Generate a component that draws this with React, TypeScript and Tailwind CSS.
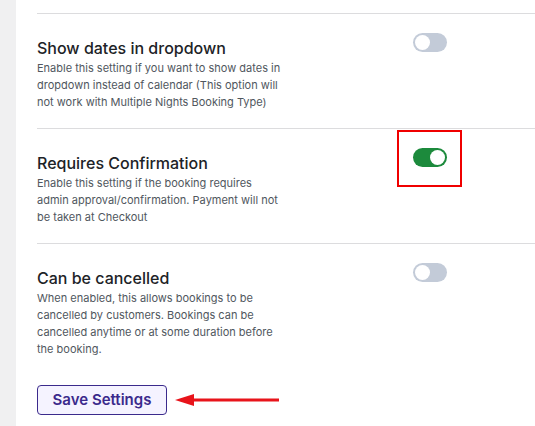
import { useState } from 'react';

type Setting = {
  id: string;
  title: string;
  lines: string[];
  enabled: boolean;
  highlight?: boolean;
};

const initialSettings: Setting[] = [
  {
    id: 'dates_dropdown',
    title: 'Show dates in dropdown',
    lines: [
      'Enable this setting if you want to show dates in',
      'dropdown instead of calendar (This option will',
      'not work with Multiple Nights Booking Type)',
    ],
    enabled: false,
  },
  {
    id: 'requires_confirmation',
    title: 'Requires Confirmation',
    lines: [
      'Enable this setting if the booking requires',
      'admin approval/confirmation. Payment will not',
      'be taken at Checkout',
    ],
    enabled: true,
    highlight: true,
  },
  {
    id: 'can_cancel',
    title: 'Can be cancelled',
    lines: [
      'When enabled, this allows bookings to be',
      'cancelled by customers. Bookings can be',
      'cancelled anytime or at some duration before',
      'the booking.',
    ],
    enabled: false,
  },
];

function Toggle({ on, onChange }: { on: boolean; onChange: () => void }) {
  return (
    <button
      type="button"
      onClick={onChange}
      className={`relative flex h-[19px] w-[34px] shrink-0 items-center rounded-full px-[2px] ${
        on ? 'justify-end bg-[#1c8a3c]' : 'justify-start bg-[#c3cbd8]'
      }`}
    >
      <span className="h-[15px] w-[15px] rounded-full bg-white" />
    </button>
  );
}

export default function App() {
  const [settings, setSettings] = useState(initialSettings);

  const flip = (id: string) =>
    setSettings((s) => s.map((x) => (x.id === id ? { ...x, enabled: !x.enabled } : x)));

  return (
    <div className="flex min-h-[426px] w-[535px] bg-[#f0f0f1] font-['Inter',sans-serif]">
      <div className="ml-[16px] flex-1 bg-white pl-[21px] pt-[13px]">
        {settings.map((s) => (
          <div key={s.id} className="flex border-t border-[#dcdcde] pb-[17px] pt-[19px]">
            <div className="w-[376px] shrink-0">
              <h3 className="mt-[3px] text-[16px] font-medium leading-[24px] text-[#1d2327]">
                {s.title}
              </h3>
              <p className="whitespace-nowrap text-[11px] leading-[17px] text-[#50575e]">
                {s.lines.map((l, i) => (
                  <span key={i} className="block">
                    {l}
                  </span>
                ))}
              </p>
            </div>
            <div className="relative">
              <Toggle on={s.enabled} onChange={() => flip(s.id)} />
              {s.highlight && (
                <div className="pointer-events-none absolute left-[-16px] top-[-18px] h-[57px] w-[65px] border-2 border-[#f00000]" />
              )}
            </div>
          </div>
        ))}

        {/* Save */}
        <div className="mt-[10px] flex items-center gap-[8px]">
          <button
            type="button"
            className="h-[30px] w-[130px] rounded-[4px] border border-[#3b2a8c] bg-[#f5f3ff] text-[15px] font-semibold text-[#3b2a8c]"
          >
            Save Settings
          </button>
          <svg width="104" height="14" viewBox="0 0 104 14" className="text-[#e8141b]">
            <path d="M0 7 L19 1 L19 13 Z" fill="currentColor" />
            <line x1="17" y1="7" x2="104" y2="7" stroke="currentColor" strokeWidth="3" />
          </svg>
        </div>
      </div>
    </div>
  );
}
